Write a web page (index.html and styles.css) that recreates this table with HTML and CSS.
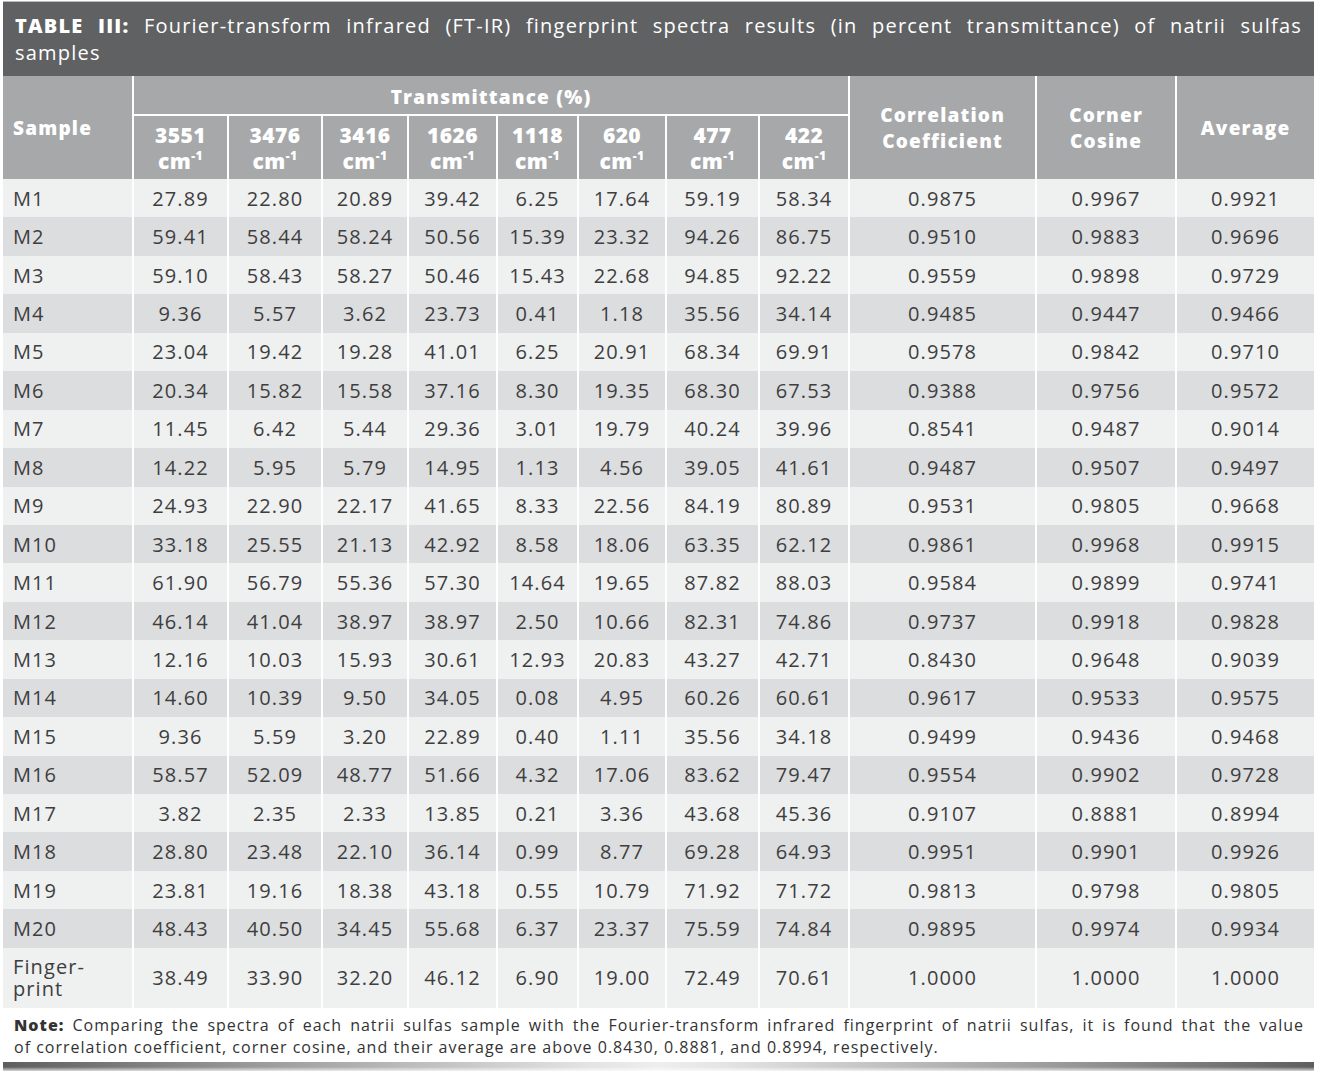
FILE: index.html
```html
<!DOCTYPE html>
<html>
<head>
<meta charset="utf-8">
<link rel="stylesheet" href="styles.css">
</head>
<body>
<div class="wrap">
  <div class="title"><span class="line1"><b>TABLE III:</b> Fourier-transform infrared (FT-IR) fingerprint spectra results (in percent transmittance) of natrii sulfas</span><span class="line2">samples</span></div>
  <table class="tbl">
    <colgroup>
      <col class="c0"><col class="c1"><col class="c2"><col class="c3"><col class="c4"><col class="c5"><col class="c6"><col class="c7"><col class="c8"><col class="c9"><col class="c10"><col class="c11">
    </colgroup>
    <thead>
      <tr class="h1">
        <th rowspan="2" class="left">Sample</th>
        <th colspan="8" class="trans">Transmittance (%)</th>
        <th rowspan="2">Correlation<br>Coefficient</th>
        <th rowspan="2">Corner<br>Cosine</th>
        <th rowspan="2">Average</th>
      </tr>
      <tr class="h2">
        <th class="sub">3551<br>cm<sup>-1</sup></th>
        <th class="sub">3476<br>cm<sup>-1</sup></th>
        <th class="sub">3416<br>cm<sup>-1</sup></th>
        <th class="sub">1626<br>cm<sup>-1</sup></th>
        <th class="sub">1118<br>cm<sup>-1</sup></th>
        <th class="sub">620<br>cm<sup>-1</sup></th>
        <th class="sub">477<br>cm<sup>-1</sup></th>
        <th class="sub">422<br>cm<sup>-1</sup></th>
      </tr>
    </thead>
    <tbody>
      <tr><td>M1</td><td>27.89</td><td>22.80</td><td>20.89</td><td>39.42</td><td>6.25</td><td>17.64</td><td>59.19</td><td>58.34</td><td>0.9875</td><td>0.9967</td><td>0.9921</td></tr>
      <tr><td>M2</td><td>59.41</td><td>58.44</td><td>58.24</td><td>50.56</td><td>15.39</td><td>23.32</td><td>94.26</td><td>86.75</td><td>0.9510</td><td>0.9883</td><td>0.9696</td></tr>
      <tr><td>M3</td><td>59.10</td><td>58.43</td><td>58.27</td><td>50.46</td><td>15.43</td><td>22.68</td><td>94.85</td><td>92.22</td><td>0.9559</td><td>0.9898</td><td>0.9729</td></tr>
      <tr><td>M4</td><td>9.36</td><td>5.57</td><td>3.62</td><td>23.73</td><td>0.41</td><td>1.18</td><td>35.56</td><td>34.14</td><td>0.9485</td><td>0.9447</td><td>0.9466</td></tr>
      <tr><td>M5</td><td>23.04</td><td>19.42</td><td>19.28</td><td>41.01</td><td>6.25</td><td>20.91</td><td>68.34</td><td>69.91</td><td>0.9578</td><td>0.9842</td><td>0.9710</td></tr>
      <tr><td>M6</td><td>20.34</td><td>15.82</td><td>15.58</td><td>37.16</td><td>8.30</td><td>19.35</td><td>68.30</td><td>67.53</td><td>0.9388</td><td>0.9756</td><td>0.9572</td></tr>
      <tr><td>M7</td><td>11.45</td><td>6.42</td><td>5.44</td><td>29.36</td><td>3.01</td><td>19.79</td><td>40.24</td><td>39.96</td><td>0.8541</td><td>0.9487</td><td>0.9014</td></tr>
      <tr><td>M8</td><td>14.22</td><td>5.95</td><td>5.79</td><td>14.95</td><td>1.13</td><td>4.56</td><td>39.05</td><td>41.61</td><td>0.9487</td><td>0.9507</td><td>0.9497</td></tr>
      <tr><td>M9</td><td>24.93</td><td>22.90</td><td>22.17</td><td>41.65</td><td>8.33</td><td>22.56</td><td>84.19</td><td>80.89</td><td>0.9531</td><td>0.9805</td><td>0.9668</td></tr>
      <tr><td>M10</td><td>33.18</td><td>25.55</td><td>21.13</td><td>42.92</td><td>8.58</td><td>18.06</td><td>63.35</td><td>62.12</td><td>0.9861</td><td>0.9968</td><td>0.9915</td></tr>
      <tr><td>M11</td><td>61.90</td><td>56.79</td><td>55.36</td><td>57.30</td><td>14.64</td><td>19.65</td><td>87.82</td><td>88.03</td><td>0.9584</td><td>0.9899</td><td>0.9741</td></tr>
      <tr><td>M12</td><td>46.14</td><td>41.04</td><td>38.97</td><td>38.97</td><td>2.50</td><td>10.66</td><td>82.31</td><td>74.86</td><td>0.9737</td><td>0.9918</td><td>0.9828</td></tr>
      <tr><td>M13</td><td>12.16</td><td>10.03</td><td>15.93</td><td>30.61</td><td>12.93</td><td>20.83</td><td>43.27</td><td>42.71</td><td>0.8430</td><td>0.9648</td><td>0.9039</td></tr>
      <tr><td>M14</td><td>14.60</td><td>10.39</td><td>9.50</td><td>34.05</td><td>0.08</td><td>4.95</td><td>60.26</td><td>60.61</td><td>0.9617</td><td>0.9533</td><td>0.9575</td></tr>
      <tr><td>M15</td><td>9.36</td><td>5.59</td><td>3.20</td><td>22.89</td><td>0.40</td><td>1.11</td><td>35.56</td><td>34.18</td><td>0.9499</td><td>0.9436</td><td>0.9468</td></tr>
      <tr><td>M16</td><td>58.57</td><td>52.09</td><td>48.77</td><td>51.66</td><td>4.32</td><td>17.06</td><td>83.62</td><td>79.47</td><td>0.9554</td><td>0.9902</td><td>0.9728</td></tr>
      <tr><td>M17</td><td>3.82</td><td>2.35</td><td>2.33</td><td>13.85</td><td>0.21</td><td>3.36</td><td>43.68</td><td>45.36</td><td>0.9107</td><td>0.8881</td><td>0.8994</td></tr>
      <tr><td>M18</td><td>28.80</td><td>23.48</td><td>22.10</td><td>36.14</td><td>0.99</td><td>8.77</td><td>69.28</td><td>64.93</td><td>0.9951</td><td>0.9901</td><td>0.9926</td></tr>
      <tr><td>M19</td><td>23.81</td><td>19.16</td><td>18.38</td><td>43.18</td><td>0.55</td><td>10.79</td><td>71.92</td><td>71.72</td><td>0.9813</td><td>0.9798</td><td>0.9805</td></tr>
      <tr><td>M20</td><td>48.43</td><td>40.50</td><td>34.45</td><td>55.68</td><td>6.37</td><td>23.37</td><td>75.59</td><td>74.84</td><td>0.9895</td><td>0.9974</td><td>0.9934</td></tr>
      <tr class="fp"><td class="fpname">Finger-<br>print</td><td>38.49</td><td>33.90</td><td>32.20</td><td>46.12</td><td>6.90</td><td>19.00</td><td>72.49</td><td>70.61</td><td>1.0000</td><td>1.0000</td><td>1.0000</td></tr>
    </tbody>
  </table>
  <div class="note"><span class="line1"><b>Note:</b> Comparing the spectra of each natrii sulfas sample with the Fourier-transform infrared fingerprint of natrii sulfas, it is found that the value</span><span class="line2">of correlation coefficient, corner cosine, and their average are above 0.8430, 0.8881, and 0.8994, respectively.</span></div>
  <div class="rule"></div>
</div>
</body>
</html>
```

FILE: styles.css
```css
html, body {
  margin: 0;
  padding: 0;
  background: #ffffff;
}

body {
  font-family: "Open Sans", "Liberation Sans", sans-serif;
}

.wrap {
  width: 1311px;
  margin: 1px 0 0 3px;
}

.line1 {
  display: block;
  text-align: justify;
  text-align-last: justify;
  white-space: nowrap;
}

.line2 {
  display: block;
  text-align: left;
}

.title {
  background: #606163;
  border-top: 1px solid #b9b9ba;
  color: #ffffff;
  font-size: 20px;
  line-height: 27px;
  padding: 10px 12px 10px 12px;
  letter-spacing: 1.2px;
}

.title .line1 {
  white-space: normal;
}

.title b {
  font-weight: 800;
}

.tbl {
  width: 1311px;
  border-collapse: collapse;
  table-layout: fixed;
}

.c0 { width: 130px; }
.c1 { width: 95px; }
.c2 { width: 94px; }
.c3 { width: 86px; }
.c4 { width: 89px; }
.c5 { width: 81px; }
.c6 { width: 88px; }
.c7 { width: 93px; }
.c8 { width: 90px; }
.c9 { width: 187px; }
.c10 { width: 140px; }
.c11 { width: 138px; }

.tbl th {
  background: #a7a8aa;
  color: #ffffff;
  font-weight: 800;
  font-size: 19px;
  line-height: 26px;
  letter-spacing: 1.2px;
  text-align: center;
  padding: 0;
  border-left: 2px solid #ffffff;
}

.tbl th.left {
  text-align: left;
  padding-left: 10px;
  border-left: none;
}

.h1 th {
  height: 34px;
}

.tbl th.trans {
  border-bottom: 2px solid #ffffff;
  vertical-align: middle;
  padding-top: 4px;
}

.h2 th {
  height: 63px;
}

.tbl th.sub {
  font-size: 21px;
  line-height: 26px;
  letter-spacing: 0.4px;
  padding-top: 0;
}

.tbl th.sub sup {
  font-size: 12px;
  line-height: 0;
  vertical-align: 9px;
}

.tbl td {
  font-size: 20px;
  color: #3e3e3f;
  text-align: center;
  height: 38.45px;
  padding: 0;
  border-left: 2px solid #ffffff;
  letter-spacing: 1.1px;
}

.tbl td:first-child {
  text-align: left;
  padding-left: 10px;
  border-left: none;
}

.tbl tbody tr:nth-child(odd) td {
  background: #eff0f0;
}

.tbl tbody tr:nth-child(even) td {
  background: #dcddde;
}

.tbl tr.fp td {
  height: 59px;
}

.tbl td.fpname {
  line-height: 22px;
  padding-top: 1px;
}

.note {
  padding: 6px 10px 0 11px;
  font-size: 16px;
  line-height: 22px;
  color: #333333;
  letter-spacing: 1px;
  height: 48px;
}

.note b {
  font-weight: 800;
}

.rule {
  height: 9px;
  background:
    linear-gradient(to bottom, rgba(255,255,255,0) 0%, rgba(255,255,255,0) 55%, rgba(255,255,255,0.75) 100%),
    linear-gradient(to right, #5e5e5e 0%, #9c9c9c 20%, #e4e4e4 45%, #eeeeee 50%, #e4e4e4 55%, #9c9c9c 80%, #5e5e5e 100%);
}
```
